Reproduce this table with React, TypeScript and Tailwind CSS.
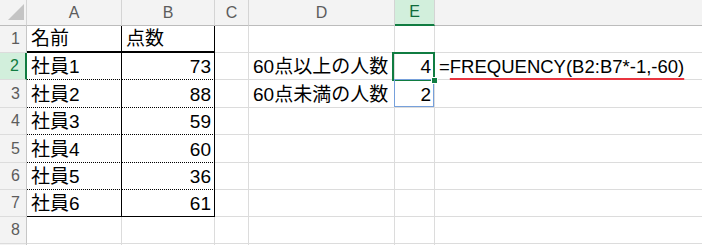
import React from "react";

const FONT = { fontFamily: '"Liberation Sans", "Noto Sans CJK JP", sans-serif' };

// F is wide and its label sits past the visible area
const COLS = ["A", "B", "C", "D", "E", ""];

const SCORES: [string, number][] = [
  ["社員1", 73],
  ["社員2", 88],
  ["社員3", 59],
  ["社員4", 60],
  ["社員5", 36],
  ["社員6", 61],
];

const GRID = "border-r border-b border-[#dcdcdc]";

function Corner() {
  return (
    <div className="relative border-r border-b border-r-[#d4d4d4] border-b-[#bcbcbc] bg-[#f3f3f3]">
      <svg className="absolute left-[8px] top-[4px]" width="16" height="16" viewBox="0 0 16 16">
        <polygon points="16,0 16,16 0,16" fill="#c4c4c4" />
      </svg>
    </div>
  );
}

function ColHead({ label }: { label: string }) {
  const active = label === "E";
  return (
    <div
      className={`flex items-center justify-center border-r border-b text-[16px] ${
        active
          ? "border-b-2 border-r-[#d4d4d4] border-b-[#107c41] bg-[#d2efdc] text-[#0f6b3a]"
          : "border-r-[#d4d4d4] border-b-[#bcbcbc] bg-[#f3f3f3] text-[#5c5c5c]"
      } ${label === "" ? "border-r-0" : ""}`}
    >
      {label}
    </div>
  );
}

function RowHead({ n }: { n?: number }) {
  const active = n === 2;
  return (
    <div
      className={`flex items-center justify-end pr-[6px] border-b border-b-[#dcdcdc] text-[16px] ${
        active
          ? "border-r-2 border-r-[#107c41] bg-[#d2efdc] text-[#107c41]"
          : "border-r border-r-[#c6c6c6] bg-[#f3f3f3] text-[#5c5c5c]"
      }`}
    >
      {n}
    </div>
  );
}

function Cell({
  className = "",
  align = "left",
  children,
}: {
  className?: string;
  align?: "left" | "right";
  children?: React.ReactNode;
}) {
  return (
    <div
      className={`relative flex items-end whitespace-nowrap pb-[1px] leading-[22px] text-black ${
        align === "right" ? "justify-end pr-[3px]" : "pl-[4px]"
      } ${className}`}
    >
      {children}
    </div>
  );
}

export default function App() {
  return (
    <div
      className="grid h-[245px] w-[702px] overflow-hidden bg-white text-[19px] grid-cols-[27px_95px_93px_34px_146px_40px_1fr] grid-rows-[26px_27px_27px_28px_27px_28px_27px_27px_27px_1fr]"
      style={FONT}
    >
      <Corner />
      {COLS.map((c) => (
        <ColHead key={c || "F"} label={c} />
      ))}

      {/* row 1: table header */}
      <RowHead n={1} />
      <Cell className="border-r border-r-black border-b-2 border-b-black">名前</Cell>
      <Cell className="border-r border-r-black border-b-2 border-b-black">点数</Cell>
      <Cell className={GRID} />
      <Cell className={GRID} />
      <Cell className={GRID} />
      <Cell className="border-b border-[#dcdcdc]" />

      {SCORES.map(([name, score], i) => {
        const row = i + 2;
        const last = row === 7;
        const edge = last
          ? "border-r border-r-black border-b border-b-black"
          : "border-r border-r-black border-b border-b-black [border-bottom-style:dotted]";
        return (
          <React.Fragment key={name}>
            <RowHead n={row} />
            <Cell className={edge}>{name}</Cell>
            <Cell className={edge} align="right">
              {score}
            </Cell>
            <Cell className={GRID} />
            {row === 2 && <Cell className={GRID}>60点以上の人数</Cell>}
            {row === 3 && <Cell className={GRID}>60点未満の人数</Cell>}
            {row > 3 && <Cell className={GRID} />}
            {row === 2 && (
              <Cell className={GRID} align="right">
                4
                <div className="absolute -left-[3px] -top-[1px] h-[calc(100%+3px)] w-[calc(100%+4px)] border-2 border-[#107c41]" />
                <div className="absolute -bottom-[5px] -right-[4px] z-10 h-[7px] w-[7px] border border-white bg-[#107c41]" />
              </Cell>
            )}
            {row === 3 && (
              <Cell className={GRID} align="right">
                2
                <div className="absolute -left-[1px] -top-[1px] h-[calc(100%+1px)] w-[calc(100%+1px)] border-[1.5px] border-[#76a0db]" />
              </Cell>
            )}
            {row > 3 && <Cell className={GRID} />}
            {row === 2 ? (
              <Cell className="border-b border-[#dcdcdc] pl-[3px]">
                <span className="text-[18.5px]">
                  =
                  <span className="underline decoration-[#e8343f] decoration-2 underline-offset-[5px]">
                    FREQUENCY(B2:B7*-1,-60)
                  </span>
                </span>
              </Cell>
            ) : (
              <Cell className="border-b border-[#dcdcdc]" />
            )}
          </React.Fragment>
        );
      })}

      {/* row 8, plus the top edge of row 9 */}
      {[8, 9].map((row) => (
        <React.Fragment key={row}>
          <RowHead n={row === 8 ? 8 : undefined} />
          <Cell className={GRID} />
          <Cell className={GRID} />
          <Cell className={GRID} />
          <Cell className={GRID} />
          <Cell className={GRID} />
          <Cell className="border-b border-[#dcdcdc]" />
        </React.Fragment>
      ))}
    </div>
  );
}
